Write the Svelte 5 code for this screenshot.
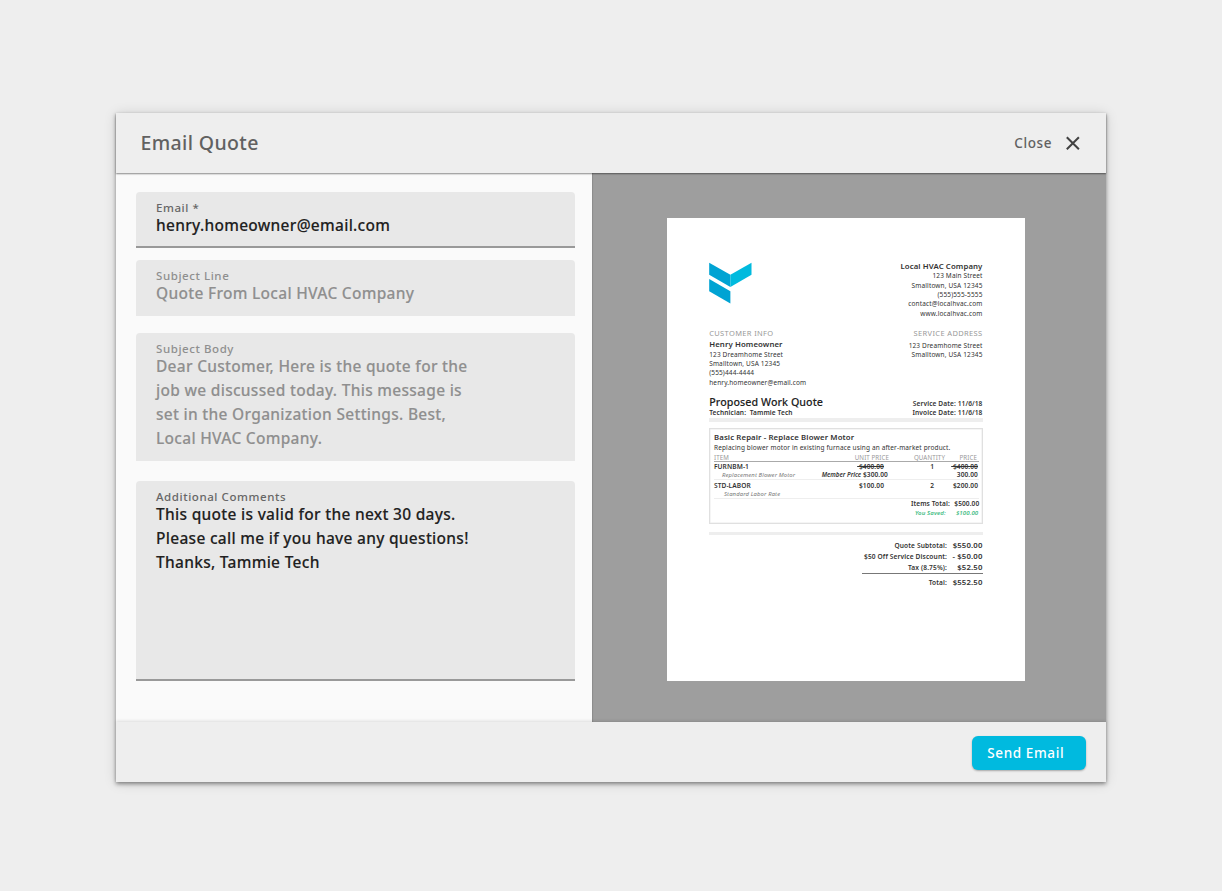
<script>
  const fields = [
    { label: 'Email *', lines: ['henry.homeowner@email.com'], kind: 'active email' },
    { label: 'Subject Line', lines: ['Quote From Local HVAC Company'], kind: 'locked subject' },
    {
      label: 'Subject Body',
      lines: [
        'Dear Customer, Here is the quote for the',
        'job we discussed today. This message is',
        'set in the Organization Settings. Best,',
        'Local HVAC Company.'
      ],
      kind: 'locked message'
    },
    {
      label: 'Additional Comments',
      lines: ['This quote is valid for the next 30 days.', 'Please call me if you have any questions!', 'Thanks, Tammie Tech'],
      kind: 'active comments'
    }
  ];
  const company = ['123 Main Street', 'Smalltown, USA 12345', '(555)555-5555', 'contact@localhvac.com', 'www.localhvac.com'];
  const customer = ['123 Dreamhome Street', 'Smalltown, USA 12345', '(555)444-4444', 'henry.homeowner@email.com'];
  const service = ['123 Dreamhome Street', 'Smalltown, USA 12345'];
  const totals = [
    ['Quote Subtotal:', '$550.00'],
    ['$50 Off Service Discount:', '- $50.00'],
    ['Tax (8.75%):', '$52.50']
  ];
</script>

<main>
  <section class="dialog">
    <header class="top">
      <h1>Email Quote</h1>
      <button class="close">
        <span>Close</span>
        <svg width="14" height="14" viewBox="0 0 14 14"><path d="M.8 1.200 12.900 13.300M12.900 1.200.8 13.300" stroke="#424242" stroke-width="2" fill="none" /></svg>
      </button>
    </header>

    <div class="body">
      <form>
        {#each fields as f}
          <div class="field {f.kind}">
            <span class="label">{f.label}</span>
            {#each f.lines as line}<p>{line}</p>{/each}
          </div>
        {/each}
      </form>

      <div class="preview">
        <article class="paper">
          <div class="letterhead">
            <svg width="43" height="42" viewBox="0 0 43 42">
              <path d="M.2.800 21.400 12.800V25L.2 12.800Z" fill="#00a3d3" />
              <path d="M42.500.800 21.400 12.800V25L42.500 12.800Z" fill="#00bade" />
              <path d="M.2 17 21.400 29.200V41.500L.2 29.200Z" fill="#00a3d3" />
            </svg>
            <div class="right">
              <strong>Local HVAC Company</strong>
              {#each company as l}<p>{l}</p>{/each}
            </div>
          </div>

          <div class="parties">
            <div>
              <h3>CUSTOMER INFO</h3>
              <strong>Henry Homeowner</strong>
              {#each customer as l}<p>{l}</p>{/each}
            </div>
            <div class="right service">
              <h3>SERVICE ADDRESS</h3>
              {#each service as l}<p>{l}</p>{/each}
            </div>
          </div>

          <div class="heading">
            <div>
              <h2>Proposed Work Quote</h2>
              <p class="tech">Technician:&nbsp; Tammie Tech</p>
            </div>
            <div class="dates">
              <p>Service Date: 11/6/18</p>
              <p>Invoice Date: 11/6/18</p>
            </div>
          </div>
          <div class="bar"></div>

          <div class="job">
            <h4>Basic Repair - Replace Blower Motor</h4>
            <p class="desc">Replacing blower motor in existing furnace using an after-market product.</p>
            <div class="row head">
              <span>ITEM</span><span class="h-unit">UNIT PRICE</span><span class="h-qty">QUANTITY</span><span class="h-price">PRICE</span>
            </div>
            <div class="row item">
              <div><b>FURNBM-1</b><i>Replacement Blower Motor</i></div>
              <div class="c-unit"><s>&nbsp;$400.00</s><em class="member"><i>Member Price</i> $300.00</em></div>
              <div class="c-qty">1</div>
              <div><s>&nbsp;$400.00</s><em>300.00</em></div>
            </div>
            <div class="row item second">
              <div><b>STD-LABOR</b><i>Standard Labor Rate</i></div>
              <div class="c-unit">$100.00</div>
              <div class="c-qty">2</div>
              <div>$200.00</div>
            </div>
            <div class="sum"><span>Items Total:</span><span class="amt">$500.00</span></div>
            <div class="sum saved"><span>You Saved:</span><span class="amt">$100.00</span></div>
          </div>
          <div class="bar lower"></div>

          <div class="totals">
            {#each totals as [k, v]}
              <div class="line"><span>{k}</span><b>{v}</b></div>
            {/each}
            <div class="line grand"><span>Total:</span><b>$552.50</b></div>
          </div>
        </article>
      </div>
    </div>

    <footer>
      <button class="send">Send Email</button>
    </footer>
  </section>
</main>

<style>
  :global(body) { margin: 0; background: #eee; }
  * { box-sizing: border-box; }
  h1, h2, h3, h4, p { margin: 0; font-weight: inherit; }
  main {
    height: 891px;
    padding: 113px 116px 0;
    background: #eee;
    font-family: 'Noto Sans', sans-serif;
    overflow: hidden;
  }
  .dialog {
    display: flex;
    flex-direction: column;
    width: 990px;
    height: 669px;
    background: #fafafa;
    box-shadow: 0 2px 4px rgba(0, 0, 0, .4), 0 1px 12px rgba(0, 0, 0, .14);
  }
  button { border: 0; background: none; font: inherit; padding: 0; }
  .top {
    position: relative;
    display: flex;
    justify-content: space-between;
    height: 60px;
    padding: 0 26.500px 0 24.500px;
    background: #eee;
    box-shadow: 0 1px 1.500px rgba(0, 0, 0, .45);
  }
  h1 { font-size: 19.500px; font-weight: 500; line-height: 60px; letter-spacing: .37px; color: #616161; }
  .close { display: flex; align-items: center; gap: 13.500px; color: #616161; font-size: 13.500px; font-weight: 500; letter-spacing: .6px; }
  .close span { padding-bottom: 1px; }
  .body { display: flex; height: 549px; }
  form { width: 476px; padding: 19px 17px 0 20px; }
  .field {
    padding: 8px 20px 0;
    background: #e8e8e8;
    border-radius: 4px 4px 0 0;
    color: #212121;
    font-size: 15.500px;
    font-weight: 500;
    line-height: 24px;
    letter-spacing: .29px;
    white-space: nowrap;
    -webkit-text-stroke: .12px;
  }
  .label { display: block; height: 13px; font-size: 11.500px; line-height: 16px; letter-spacing: .57px; color: #666; -webkit-text-stroke: 0; }
  .active { border-bottom: 2px solid #999; }
  .locked, .locked .label { color: #8f8f8f; }
  .email { height: 56px; }
  .subject { height: 56px; margin-top: 12px; }
  .message { height: 128px; margin-top: 17px; }
  .comments { height: 200px; margin-top: 20px; }

  .preview { width: 514px; padding: 45px 0 0 75px; background: #9e9e9e; box-shadow: inset 1px 0 1px rgba(0, 0, 0, .12); }
  .paper {
    width: 357.500px;
    height: 463px;
    padding: 44px 42px 0 42.200px;
    background: #fff;
    color: #333;
    font-size: 6.500px;
    line-height: 9.350px;
    letter-spacing: .14px;
    white-space: nowrap;
  }
  .paper strong { display: block; font-size: 7.800px; font-weight: 600; letter-spacing: .1px; }
  .right { text-align: right; }
  .letterhead { display: flex; justify-content: space-between; height: 66px; }
  .parties { display: flex; justify-content: space-between; height: 67px; }
  h3 { height: 12.300px; font-size: 7.500px; line-height: 11px; letter-spacing: .35px; color: #999; }
  .service h3 { height: 12.500px; }
  .heading { display: flex; justify-content: space-between; height: 23px; }
  h2 { font-size: 10.700px; font-weight: 500; line-height: 14px; letter-spacing: .06px; color: #222; -webkit-text-stroke: .1px; }
  .tech, .dates { font-size: 6.600px; font-weight: 600; letter-spacing: .1px; }
  .tech { line-height: 8px; }
  .dates { padding-top: 4px; line-height: 9px; text-align: right; }
  .bar { height: 3.500px; background: #eee; }
  .job { height: 96px; margin-top: 6.500px; padding: 2.500px 3px 0 3.800px; border: 1.500px solid #e0e0e0; box-shadow: inset 0 0 0 .5px #ececec; }
  h4 { font-size: 7.800px; font-weight: 600; line-height: 11px; letter-spacing: .11px; }
  .desc { line-height: 9px; letter-spacing: .135px; }
  .row { display: grid; grid-template-columns: 105px 70px 57px 32px; text-align: right; }
  .row > :first-child { text-align: left; }
  .head { height: 10px; font-size: 6.200px; line-height: 11.500px; letter-spacing: .08px; color: #999; border-bottom: 1px solid #aaa; }
  .h-qty { padding-right: 1px; }
  .h-price { padding-right: 1px; }
  .item { height: 18.500px; padding-top: 1.500px; font-size: 6.600px; line-height: 8px; letter-spacing: .08px; font-weight: 600; border-bottom: 1px solid #eee; }
  .item b, .item s, .item em { display: block; font-style: normal; font-weight: 600; }
  .item div:first-child i { display: block; padding-left: 8px; font-size: 5.900px; letter-spacing: .12px; font-weight: 400; color: #777; }
  .second div:first-child i { padding-left: 10px; }
  .c-unit { padding-right: 5px; }
  .member { margin: 0 -4px 0 -20px; }
  .member i { font-size: 6.200px; letter-spacing: 0; }
  .c-qty { padding-right: 12px; }
  .sum { display: flex; justify-content: flex-end; font-size: 6.600px; letter-spacing: .08px; font-weight: 600; line-height: 10px; margin-right: -.8px; padding-top: .8px; }
  .amt { width: 29.500px; text-align: right; }
  .saved { padding: 0 1px 0 0; color: #45bd85; font-size: 6.100px; font-style: italic; line-height: 7.500px; }
  .saved .amt { width: 32.500px; }
  .bar.lower { margin-top: 7.500px; }
  .totals { width: 121px; margin: 4.500px 0 0 auto; }
  .line { display: flex; justify-content: flex-end; height: 11px; font-size: 6.600px; letter-spacing: .13px; font-weight: 600; line-height: 11px; }
  .line b { width: 35.500px; text-align: right; font-size: 7.800px; font-weight: 600; }
  .grand { height: 16px; border-top: 1px solid #777; line-height: 17px; }

  footer {
    position: relative;
    display: flex;
    justify-content: flex-end;
    height: 60px;
    padding: 14px 20px 0;
    background: #eee;
    box-shadow: 0 -1px 3px rgba(0, 0, 0, .12);
  }
  .send {
    width: 114.500px;
    height: 33.500px;
    padding-right: 6px;
    border-radius: 6px;
    background: #00badf;
    color: #fff;
    font-size: 13.500px;
    font-weight: 500;
    letter-spacing: .6px;
    box-shadow: 0 1px 2px rgba(0, 0, 0, .3);
  }
</style>
